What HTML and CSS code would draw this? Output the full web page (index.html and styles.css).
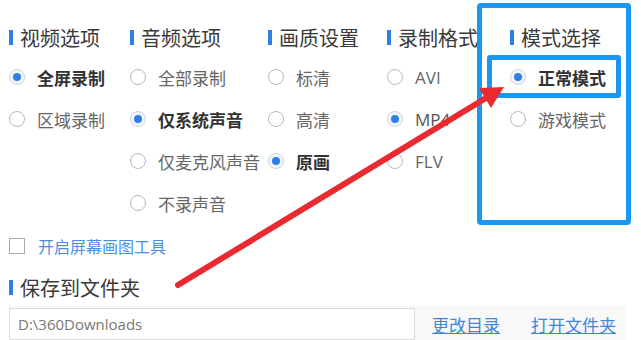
FILE: index.html
```html
<!DOCTYPE html>
<html lang="zh-CN">
  <head>
    <meta charset="UTF-8" />
    <title>录制设置</title>
    <link rel="stylesheet" href="styles.css">
  </head>
  <body>
    <div class="panel">
      <div class="options">
        <div class="col c1">
          <div class="title">视频选项</div>
          <label class="radio on"><i></i>全屏录制</label>
          <label class="radio"><i></i>区域录制</label>
        </div>
        <div class="col c2">
          <div class="title">音频选项</div>
          <label class="radio"><i></i>全部录制</label>
          <label class="radio on"><i></i>仅系统声音</label>
          <label class="radio"><i></i>仅麦克风声音</label>
          <label class="radio"><i></i>不录声音</label>
        </div>
        <div class="col c3">
          <div class="title">画质设置</div>
          <label class="radio"><i></i>标清</label>
          <label class="radio"><i></i>高清</label>
          <label class="radio on"><i></i>原画</label>
        </div>
        <div class="col c4">
          <div class="title">录制格式</div>
          <label class="radio latin"><i></i>AVI</label>
          <label class="radio latin on"><i></i>MP4</label>
          <label class="radio latin"><i></i>FLV</label>
        </div>
        <div class="col c5">
          <div class="title">模式选择</div>
          <label class="radio on"><i></i>正常模式</label>
          <label class="radio"><i></i>游戏模式</label>
        </div>
      </div>

      <label class="check"><i></i>开启屏幕画图工具</label>

      <div class="title">保存到文件夹</div>
      <div class="save-row">
        <div class="path">D:\360Downloads</div>
        <a href="#" class="link">更改目录</a>
        <a href="#" class="link">打开文件夹</a>
      </div>
    </div>

    <!-- annotation overlay -->
    <div class="mark-outer"></div>
    <div class="mark-inner"></div>
    <svg class="arrow" width="641" height="340" viewBox="0 0 641 340">
      <line x1="178" y1="285" x2="486" y2="98" stroke="#e92a30" stroke-width="6" stroke-linecap="round" />
      <polygon points="504,87 491,108 479,88" fill="#e92a30" />
    </svg>
  </body>
</html>
```

FILE: styles.css
```css
html, body {
  margin: 0;
  background: #fff;
}
body {
  width: 641px;
  height: 340px;
  overflow: hidden;
  position: relative;
  font-family: "Noto Sans CJK SC", "Noto Sans", sans-serif;
  color: #555;
}
.panel {
  padding: 18px 0 0 9px;
}
.options {
  display: grid;
  grid-template-columns: 121px 138px 119px 123px 120px;
}
.col {
  display: flex;
  flex-direction: column;
}
.title {
  display: flex;
  align-items: center;
  height: 38px;
  font-size: 20px;
  color: #3a3a3a;
  white-space: nowrap;
}
.title::before {
  content: "";
  width: 4px;
  height: 15px;
  background: #2f7fe0;
  margin-right: 7px;
}
.radio {
  display: flex;
  align-items: center;
  height: 42px;
  font-size: 17px;
  color: #666;
  white-space: nowrap;
}
.radio i {
  width: 14px;
  height: 14px;
  border: 1px solid #b9b9b9;
  border-radius: 50%;
  margin: 0 12px 0 0;
  position: relative;
  flex-shrink: 0;
}
.radio.on {
  color: #333;
  font-weight: bold;
}
.radio.on i {
  border-color: #c9d6e6;
  background: #f2f6fb;
}
.radio.on i::after {
  content: "";
  position: absolute;
  left: 3px;
  top: 3px;
  width: 8px;
  height: 8px;
  border-radius: 50%;
  background: #2b7fe6;
}
.radio.latin {
  font-family: "Open Sans", "Noto Sans", sans-serif;
  font-size: 17px;
}
.radio.latin.on {
  font-weight: normal;
  color: #555;
}
.check {
  display: flex;
  align-items: center;
  height: 44px;
  font-size: 16px;
  color: #4a90e2;
}
.check i {
  width: 14px;
  height: 14px;
  border: 1px solid #aaa;
  margin: 0 13px 0 0;
}
.save-row {
  display: flex;
  align-items: center;
  height: 36px;
  width: 617px;
  background: #f8f8f8;
}
.path {
  width: 396px;
  height: 30px;
  line-height: 30px;
  border: 1px solid #dcdcdc;
  background: #fff;
  padding-left: 8px;
  font-family: "Open Sans", "Noto Sans", sans-serif;
  font-size: 15px;
  color: #777;
}
.link {
  margin-left: 17px;
  font-size: 17px;
  color: #3e86d8;
  text-decoration: underline;
}
.link + .link {
  margin-left: 31px;
}
.mark-outer {
  position: absolute;
  left: 477px;
  top: 3px;
  width: 144px;
  height: 212px;
  border: 5px solid #1a97f2;
  border-radius: 4px;
}
.mark-inner {
  position: absolute;
  left: 487px;
  top: 55px;
  width: 124px;
  height: 33px;
  border: 5px solid #1a97f2;
  border-radius: 3px;
}
.arrow {
  position: absolute;
  left: 0;
  top: 0;
}
```
